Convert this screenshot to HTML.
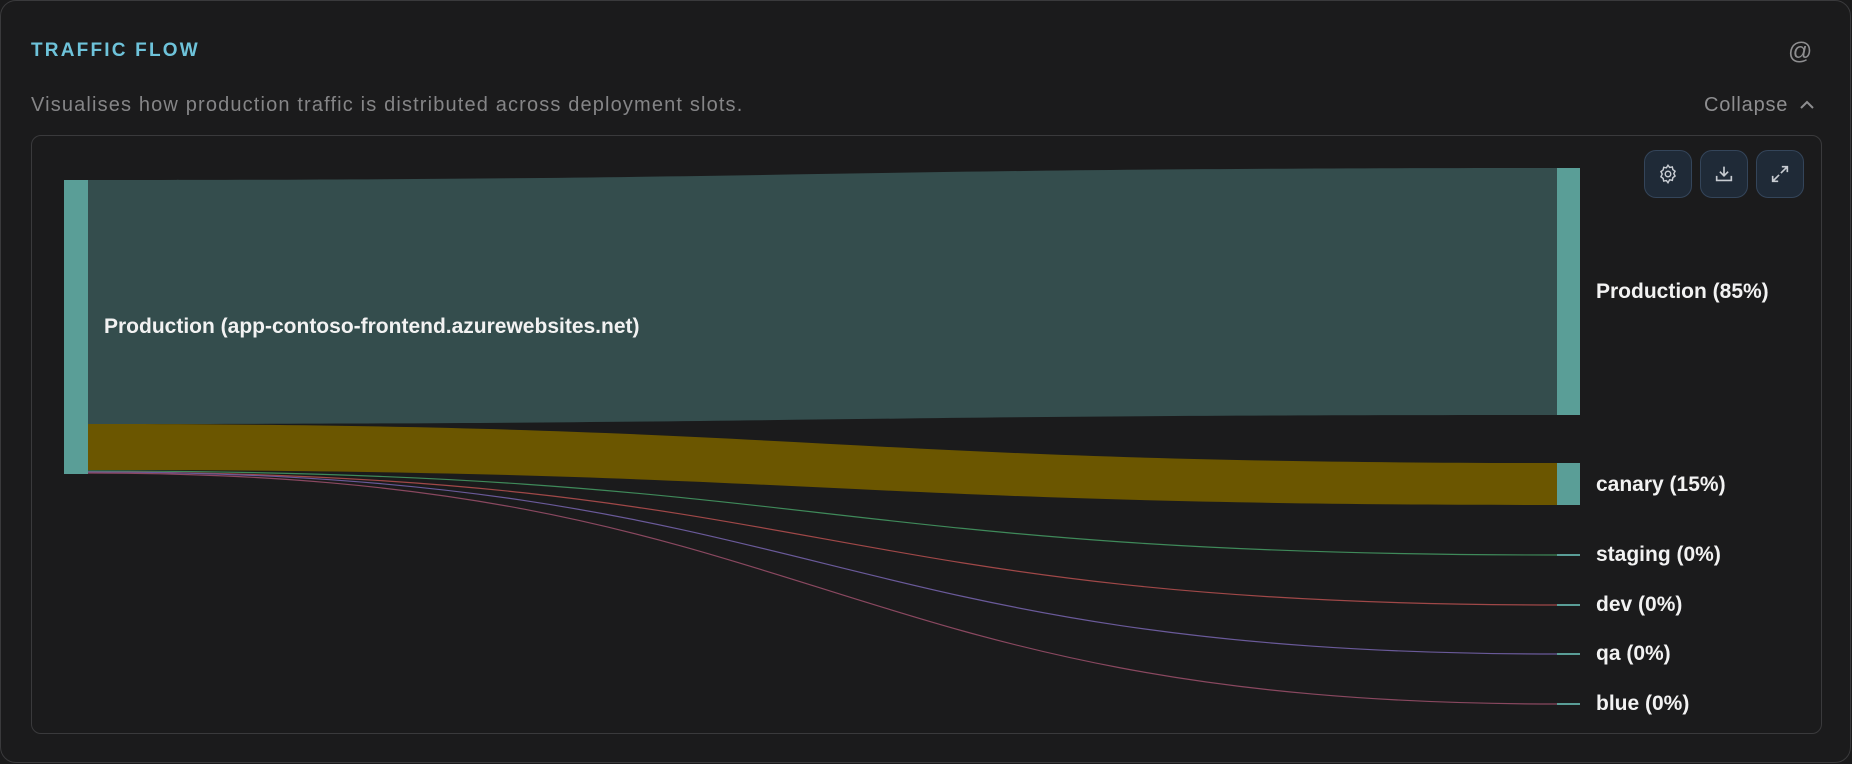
<!DOCTYPE html>
<html><head><meta charset="utf-8"><style>
html,body{margin:0;padding:0;background:#1a1a1b;width:1852px;height:764px;overflow:hidden}
body{font-family:"Liberation Sans",Arial,sans-serif;position:relative}
.card{position:absolute;left:0;top:0;width:1849px;height:761px;border:1px solid #3a3a3c;border-radius:16px;background:#1b1b1c}
.title{position:absolute;left:31px;top:40px;font-size:19px;font-weight:bold;letter-spacing:2.2px;color:#6ec3da}
.at{position:absolute;left:1788px;top:38px;font-size:24px;color:#8e8e90}
.sub{position:absolute;left:31px;top:94px;font-size:20px;letter-spacing:1.15px;color:#858587}
.col{position:absolute;left:1704px;top:94px;font-size:20px;letter-spacing:0.8px;color:#8e8e90}
.inner{position:absolute;left:31px;top:135px;width:1789px;height:597px;border:1px solid #3a3a3c;border-radius:10px}
.btn{position:absolute;top:150px;width:46px;height:46px;border:1px solid #34455a;border-radius:12px;background:#1f2a37;display:flex;align-items:center;justify-content:center}
.lbl{position:absolute;font-size:21px;color:#f2f2f2;font-weight:bold}
</style></head><body>
<div class="card"></div>
<div class="title">TRAFFIC FLOW</div>
<div class="at">@</div>
<div class="sub">Visualises how production traffic is distributed across deployment slots.</div>
<div class="col">Collapse<svg width="18" height="12" viewBox="0 0 18 12" style="margin-left:10px"><path d="M3 9 L9 3 L15 9" fill="none" stroke="#8e8e90" stroke-width="2"/></svg></div>
<div class="inner"></div>
<svg style="position:absolute;left:0;top:0" width="1852" height="764">
<path d="M88,180 C822,180 822,168 1557,168 L1557,415 C822,415 822,424 88,424 Z" fill="#344d4d"/>
<path d="M88,424 C822,424 822,463 1557,463 L1557,505 C822,505 822,470 88,470 Z" fill="#6b5600"/>
<path d="M88,471 C822,471 822,555 1557,555" fill="none" stroke="#3f8a5a" stroke-width="1.2"/>
<path d="M88,472 C822,472 822,605 1557,605" fill="none" stroke="#a04848" stroke-width="1.2"/>
<path d="M88,472 C822,472 822,654 1557,654" fill="none" stroke="#6a5a9a" stroke-width="1.2"/>
<path d="M88,473 C822,473 822,704 1557,704" fill="none" stroke="#8a4860" stroke-width="1.2"/>
<rect x="64" y="180" width="24" height="294" fill="#5a9e97"/>
<rect x="1557" y="168" width="23" height="247" fill="#5a9e97"/>
<rect x="1557" y="463" width="23" height="42" fill="#5a9e97"/>
<rect x="1557" y="554" width="23" height="2" fill="#5a9e97"/>
<rect x="1557" y="604" width="23" height="2" fill="#5a9e97"/>
<rect x="1557" y="653" width="23" height="2" fill="#5a9e97"/>
<rect x="1557" y="703" width="23" height="2" fill="#5a9e97"/>
</svg>
<div class="lbl" style="left:104px;top:315px">Production (app-contoso-frontend.azurewebsites.net)</div>
<div class="lbl" style="left:1596px;top:280px">Production (85%)</div>
<div class="lbl" style="left:1596px;top:473px">canary (15%)</div>
<div class="lbl" style="left:1596px;top:543px">staging (0%)</div>
<div class="lbl" style="left:1596px;top:593px">dev (0%)</div>
<div class="lbl" style="left:1596px;top:642px">qa (0%)</div>
<div class="lbl" style="left:1596px;top:692px">blue (0%)</div>
<div class="btn" style="left:1644px"><svg width="22" height="22" viewBox="0 0 24 24" fill="none" stroke="#c8ccd2" stroke-width="1.6"><circle cx="12" cy="12" r="3"/><path d="M12 2.5l1.8 2.4 2.9-.6.6 2.9 2.4 1.8-1.4 2.6 1.4 2.6-2.4 1.8-.6 2.9-2.9-.6L12 21.5l-1.8-2.4-2.9.6-.6-2.9-2.4-1.8L5.7 12 4.3 9.4l2.4-1.8.6-2.9 2.9.6z"/></svg></div>
<div class="btn" style="left:1700px"><svg width="22" height="22" viewBox="0 0 24 24" fill="none" stroke="#c8ccd2" stroke-width="1.8"><path d="M12 4v10M7.5 9.5L12 14l4.5-4.5M4 14v5h16v-5"/></svg></div>
<div class="btn" style="left:1756px"><svg width="22" height="22" viewBox="0 0 24 24" fill="none" stroke="#c8ccd2" stroke-width="1.8"><path d="M14 4h6v6M20 4l-7 7M10 20H4v-6M4 20l7-7"/></svg></div>
</body></html>
